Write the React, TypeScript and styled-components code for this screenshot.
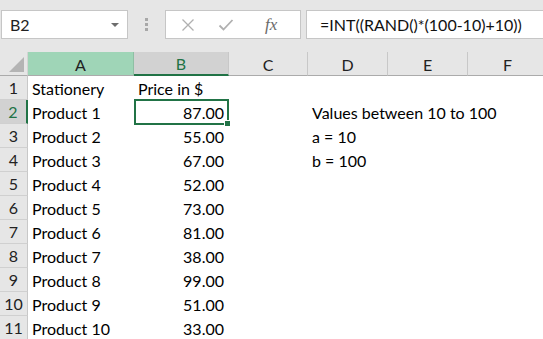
import React from 'react';
import styled, { createGlobalStyle } from 'styled-components';

const GlobalStyle = createGlobalStyle`
  html, body {
    margin: 0;
    padding: 0;
    background: #ffffff;
    overflow: hidden;
  }
  body {
    font-family: "Lato", "Open Sans", sans-serif;
  }
`;

const Window = styled.div`
  width: 543px;
  height: 339px;
  overflow: hidden;
  background: #ffffff;
  display: flex;
  flex-direction: column;
`;

const FormulaBar = styled.div`
  height: 52px;
  flex: none;
  background: #e6e6e6;
  display: flex;
  align-items: flex-start;
  padding-top: 10px;
  box-sizing: border-box;
`;

const NameBox = styled.div`
  width: 127px;
  height: 29px;
  margin-left: 1px;
  background: #ffffff;
  border: 1px solid #c6c6c6;
  box-sizing: border-box;
  display: flex;
  align-items: center;
  justify-content: space-between;
  padding: 0 8px 0 8px;
  font-size: 16px;
  color: #222;
`;

const Caret = styled.span`
  width: 0;
  height: 0;
  border-left: 4px solid transparent;
  border-right: 4px solid transparent;
  border-top: 4px solid #6d6d6d;
  margin-top: 1px;
`;

const Grip = styled.div`
  width: 37px;
  height: 29px;
  display: flex;
  flex-direction: column;
  align-items: center;
  justify-content: center;
  gap: 2px;
`;

const GripDot = styled.span`
  width: 3px;
  height: 3px;
  background: #a8a8a8;
`;

const IconBox = styled.div`
  width: 136px;
  height: 29px;
  background: #ffffff;
  border: 1px solid #c6c6c6;
  box-sizing: border-box;
  display: flex;
  align-items: center;
  padding-left: 15px;
  gap: 23px;
`;

const Fx = styled.span`
  font-family: "Liberation Serif", "DejaVu Serif", serif;
  font-style: italic;
  font-size: 17px;
  color: #6a6a6a;
  margin-left: 8px;
`;

const FormulaInput = styled.div`
  flex: 1;
  height: 29px;
  margin-left: 5px;
  background: #ffffff;
  border: 1px solid #c6c6c6;
  border-right: none;
  box-sizing: border-box;
  display: flex;
  align-items: center;
  padding-left: 13px;
  font-size: 16px;
  color: #111;
  white-space: nowrap;
`;

const Sheet = styled.div`
  display: grid;
  grid-template-columns: 28px 106px 95px 79px 80px 80px 80px;
  grid-template-rows: 24px;
  grid-auto-rows: 24px;
`;

const Corner = styled.div`
  background: #e6e6e6;
  border-bottom: 1px solid #ababab;
  border-right: 1px solid #d4d4d4;
  box-sizing: border-box;
  position: relative;
`;

const CornerTri = styled.span`
  position: absolute;
  right: 3px;
  bottom: 3px;
  width: 0;
  height: 0;
  border-left: 15px solid transparent;
  border-bottom: 15px solid #b4b4b4;
`;

const ColHead = styled.div<{ $state?: 'green' | 'active' }>`
  background: ${p => (p.$state === 'green' ? '#9fd5b7' : p.$state === 'active' ? '#d2d2d2' : '#e6e6e6')};
  border-right: 1px solid ${p => (p.$state === 'green' ? '#8fbfa4' : '#c8c8c8')};
  border-bottom: ${p => (p.$state === 'active' ? '2px solid #217346' : '1px solid #ababab')};
  box-sizing: border-box;
  display: flex;
  align-items: center;
  justify-content: center;
  font-size: 16px;
  color: ${p => (p.$state === 'active' ? '#217346' : '#222')};
  padding-top: 1px;
`;

const RowHead = styled.div<{ $active?: boolean }>`
  background: ${p => (p.$active ? '#d2d2d2' : '#e6e6e6')};
  border-right: ${p => (p.$active ? '2px solid #217346' : '1px solid #c8c8c8')};
  border-bottom: 1px solid #d0d0d0;
  box-sizing: border-box;
  display: flex;
  align-items: center;
  justify-content: center;
  font-size: 16px;
  color: ${p => (p.$active ? '#217346' : '#222')};
`;

const Cell = styled.div<{ $num?: boolean; $selected?: boolean }>`
  position: relative;
  box-sizing: border-box;
  display: flex;
  align-items: center;
  justify-content: ${p => (p.$num ? 'flex-end' : 'flex-start')};
  padding: ${p => (p.$num ? '0 5px 0 0' : '0 0 0 4px')};
  font-size: 16px;
  color: #000;
  white-space: nowrap;
  overflow: visible;
  border: ${p => (p.$selected ? '2px solid #217346' : 'none')};
  ${p => (p.$selected ? 'margin: -1px 0 0 0; height: 26px; padding-right: 3px;' : '')}
`;

const FillHandle = styled.span`
  position: absolute;
  right: -4px;
  bottom: -4px;
  width: 5px;
  height: 5px;
  background: #217346;
  border: 1px solid #ffffff;
`;

const CloseIcon = () => (
  <svg width="14" height="14" viewBox="0 0 14 14">
    <path d="M1.5 1.5 L12.5 12.5 M12.5 1.5 L1.5 12.5" stroke="#b0b0b0" strokeWidth="1.3" fill="none" />
  </svg>
);

const CheckIcon = () => (
  <svg width="16" height="14" viewBox="0 0 16 14">
    <path d="M1.5 7.5 L5.5 11.5 L14.5 2" stroke="#b0b0b0" strokeWidth="1.8" fill="none" />
  </svg>
);

const products = [
  ['Product 1', '87.00'],
  ['Product 2', '55.00'],
  ['Product 3', '67.00'],
  ['Product 4', '52.00'],
  ['Product 5', '73.00'],
  ['Product 6', '81.00'],
  ['Product 7', '38.00'],
  ['Product 8', '99.00'],
  ['Product 9', '51.00'],
  ['Product 10', '33.00'],
];

const notes: Record<number, string> = {
  2: 'Values between 10 to 100',
  3: 'a = 10',
  4: 'b = 100',
};

const App = () => {
  const rows: [string, string][] = [['Stationery', 'Price in $'], ...(products as [string, string][])];

  return (
    <Window>
      <GlobalStyle />
      <FormulaBar>
        <NameBox>
          B2
          <Caret />
        </NameBox>
        <Grip>
          <GripDot />
          <GripDot />
          <GripDot />
        </Grip>
        <IconBox>
          <CloseIcon />
          <CheckIcon />
          <Fx>fx</Fx>
        </IconBox>
        <FormulaInput>=INT((RAND()*(100-10)+10))</FormulaInput>
      </FormulaBar>
      <Sheet>
        <Corner>
          <CornerTri />
        </Corner>
        <ColHead $state="green">A</ColHead>
        <ColHead $state="active">B</ColHead>
        <ColHead>C</ColHead>
        <ColHead>D</ColHead>
        <ColHead>E</ColHead>
        <ColHead>F</ColHead>
        {rows.map(([name, price], i) => {
          const r = i + 1;
          return (
            <React.Fragment key={r}>
              <RowHead $active={r === 2}>{r}</RowHead>
              <Cell>{name}</Cell>
              {r === 1 ? (
                <Cell>{price}</Cell>
              ) : (
                <Cell $num $selected={r === 2}>
                  {price}
                  {r === 2 && <FillHandle />}
                </Cell>
              )}
              <Cell />
              <Cell>{notes[r] ?? ''}</Cell>
              <Cell />
              <Cell />
            </React.Fragment>
          );
        })}
      </Sheet>
    </Window>
  );
};

export default App;
